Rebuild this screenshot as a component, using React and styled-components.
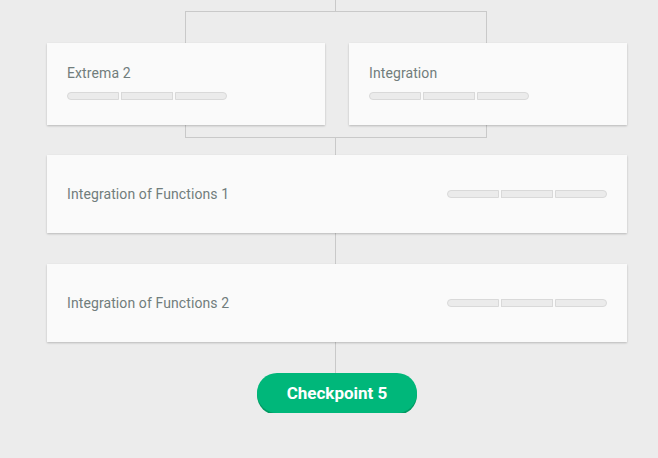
import React from "react";
import styled, { createGlobalStyle } from "styled-components";

const Global = createGlobalStyle`
  html, body { margin: 0; padding: 0; background: #ececec; }
  body { font-family: Roboto, "Noto Sans", sans-serif; }
`;

const Page = styled.div`
  width: 580px;
  margin-left: 47px;
  display: flex;
  flex-direction: column;
`;

const Stem = styled.div`
  width: 1px;
  height: ${(p) => p.$h}px;
  margin-left: 288px;
  background: #c9c9c9;
`;

const Branch = styled.div`
  position: relative;
  display: grid;
  grid-template-columns: 1fr 1fr;
  gap: 24px;
  padding: 32px 0 13px;
  &::before {
    content: "";
    position: absolute;
    top: 0;
    bottom: 0;
    left: 138px;
    width: 300px;
    border: 1px solid #c9c9c9;
  }
`;

const Card = styled.div`
  position: relative;
  background: #fafafa;
  box-shadow: 0 1px 2px rgba(0, 0, 0, 0.22);
`;

const SmallCard = styled(Card)`
  height: 82px;
  box-sizing: border-box;
  padding: 22px 20px 0;
  display: flex;
  flex-direction: column;
  gap: 11px;
`;

const WideCard = styled(Card)`
  height: 78px;
  box-sizing: border-box;
  padding: 0 20px;
  display: flex;
  align-items: center;
  justify-content: space-between;
`;

const Title = styled.div`
  font-size: 14px;
  line-height: 16px;
  color: #717d7c;
  letter-spacing: 0.1px;
`;

const Bars = styled.div`
  display: flex;
  gap: 2px;
`;

const Seg = styled.div`
  width: 52px;
  height: 8px;
  box-sizing: border-box;
  background: #ebebeb;
  border: 1px solid #d9d9d9;
  &:first-child { border-radius: 4px 0 0 4px; }
  &:last-child { border-radius: 0 4px 4px 0; }
`;

const ButtonRow = styled.div`
  display: flex;
  margin-left: 210px;
`;

const Checkpoint = styled.button`
  width: 160px;
  height: 40px;
  border: none;
  border-radius: 20px;
  background: #00b77a;
  box-shadow: 0 2px 0 #009a62;
  color: #fff;
  font-family: Roboto, "Noto Sans", sans-serif;
  font-weight: 700;
  font-size: 17px;
  padding: 0 0 1px;
  cursor: pointer;
`;

const Progress = () => (
  <Bars>
    <Seg />
    <Seg />
    <Seg />
  </Bars>
);

export default function App() {
  return (
    <>
      <Global />
      <Page>
        <Stem $h={11} />
        <Branch>
          <SmallCard>
            <Title>Extrema 2</Title>
            <Progress />
          </SmallCard>
          <SmallCard>
            <Title>Integration</Title>
            <Progress />
          </SmallCard>
        </Branch>
        <Stem $h={17} />
        <WideCard>
          <Title>Integration of Functions 1</Title>
          <Progress />
        </WideCard>
        <Stem $h={31} />
        <WideCard>
          <Title>Integration of Functions 2</Title>
          <Progress />
        </WideCard>
        <Stem $h={31} />
        <ButtonRow>
          <Checkpoint>Checkpoint 5</Checkpoint>
        </ButtonRow>
      </Page>
    </>
  );
}
